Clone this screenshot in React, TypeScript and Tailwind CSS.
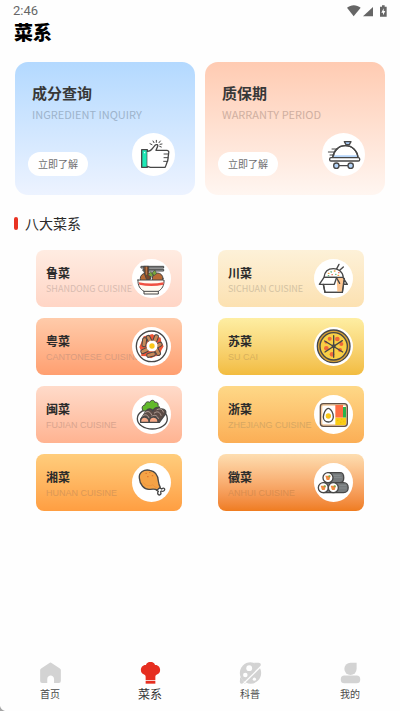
import React from 'react';

const INK = '#474747';

function ThumbIcon() {
  return (
    <svg viewBox="0 0 129 129" className="w-full h-full" fill="none" stroke={INK} strokeWidth="4" strokeLinejoin="round" strokeLinecap="round">
      <path d="M29 50h17v53H29z" fill="#1de9b6" />
      <circle cx="38" cy="59" r="2" fill="#fff" stroke="none" />
      <path d="M46 55c8 0 11-2 15-8l8-10c4-4 10-2 8 3l-5 12h33c5 1 6 4 5 8-1 3 0 5-1 8s0 6-1 9 0 6-2 9-3 11-7 17H55l-9-3" fill="#fff" />
      <path d="M96 63h12M96 74h11M95 85h10" strokeWidth="3" />
      <path d="M54 32l6 3M63 24l3 5M73 22v6M85 24l-4 5M90 33l-6 1M88 42l-5-2" strokeWidth="3" />
    </svg>
  );
}

function ClocheIcon() {
  return (
    <svg viewBox="0 0 129 129" className="w-full h-full" fill="none" stroke={INK} strokeWidth="4" strokeLinejoin="round" strokeLinecap="round">
      <path d="M32 74c3-22 18-36 38-36s36 14 38 36z" fill="#fff" />
      <path d="M35 67h70v6H34z" fill="#b5d5fa" stroke="none" />
      <path d="M32 74c3-22 18-36 38-36s36 14 38 36" />
      <path d="M67 26h20l-5 9H72z" fill="#a4c8f4" />
      <rect x="23" y="74" width="90" height="10" rx="4" fill="#fff" />
      <path d="M30 48h17M19 57h19M24 66h12" strokeWidth="3" />
      <path d="M51 98h26" />
      <circle cx="43" cy="98" r="8" fill="#b5d5fa" />
      <circle cx="86" cy="98" r="8" fill="#b5d5fa" />
    </svg>
  );
}

function NoodleBowlIcon() {
  return (
    <svg viewBox="0 0 117 117" className="w-full h-full" fill="none" stroke={INK} strokeWidth="3" strokeLinejoin="round" strokeLinecap="round">
      <path d="M28 22h67v5H28zM34 31h61v5H34z" fill="#a8adb1" />
      <circle cx="40" cy="58" r="15" fill="#b96a35" />
      <circle cx="77" cy="58" r="16" fill="#b96a35" />
      <path d="M36 22h14v18l6 12-4 10H44L38 46z" fill="#7b4728" />
      <path d="M43 24v22" stroke="#c58150" />
      <path d="M48 48l8-10 8 7-3 9zM60 42l9-9 5 11-8 6z" fill="#78a83c" strokeWidth="2" />
      <path d="M18 63h78c1 17-6 27-17 34v8H36v-8C24 90 17 80 18 63z" fill="#fffaf0" />
      <path d="M20 70c24 5 50 5 75 0l-1 7c-24 5-48 5-72 0z" fill="#ef5142" stroke="none" />
      <path d="M36 97h43" />
    </svg>
  );
}

function TakeoutBoxIcon() {
  return (
    <svg viewBox="0 0 117 117" className="w-full h-full" fill="none" stroke={INK} strokeWidth="4" strokeLinejoin="round" strokeLinecap="round">
      <path d="M67 31l8-15M77 34l11-10" />
      <path d="M30 55c2-18 14-26 28-26s28 8 30 26z" fill="#fff" />
      <path d="M43 43h2M61 36h2M72 49h2" stroke="#f0a13d" />
      <path d="M51 38l1 1M65 46h1M43 50h1" stroke="#5cb57b" />
      <path d="M54 47h1M74 41h1" stroke="#ea6753" />
      <path d="M28 76l5 24h52l6-42H62z" fill="#fff" />
      <path d="M68 57h22l-6 41H70z" fill="#fdc58f" stroke="none" />
      <path d="M30 55h38l-7 21H16z" fill="#fff" />
      <path d="M68 57l9 16M88 57l12 19-12-1M28 76l5 24h52l5-37" />
    </svg>
  );
}

function SausagePlateIcon() {
  return (
    <svg viewBox="0 0 117 117" className="w-full h-full" fill="none" stroke={INK} strokeWidth="3" strokeLinejoin="round" strokeLinecap="round">
      <circle cx="59" cy="58" r="46" fill="#fff" strokeWidth="4" />
      <path d="M35 28l14-3 12-4 10 7 15 4 2 14 7 12-7 12-4 16-14 2-13 6-12-6-17-1-1-15-5-12 6-14z" fill="#ed5536" stroke="none" />
      <g fill="#c88958">
        <rect x="31" y="32" width="12" height="27" rx="5" transform="rotate(8 37 45)" />
        <rect x="46" y="25" width="11" height="24" rx="5" transform="rotate(-28 51 37)" />
        <rect x="65" y="23" width="12" height="25" rx="5" transform="rotate(20 71 35)" />
        <rect x="73" y="43" width="12" height="25" rx="5" transform="rotate(60 79 55)" />
        <rect x="70" y="61" width="12" height="25" rx="5" transform="rotate(-28 76 73)" />
        <rect x="51" y="70" width="12" height="26" rx="5" transform="rotate(75 57 83)" />
        <rect x="32" y="59" width="12" height="24" rx="5" transform="rotate(65 38 71)" />
      </g>
      <path d="M60 41c11-1 18 7 16 16 1 10-7 17-16 16-10 1-17-6-16-16-1-9 6-17 16-16z" fill="#fff" stroke="none" />
      <circle cx="60" cy="57" r="8" fill="#fbc719" stroke="none" />
    </svg>
  );
}

function PizzaIcon() {
  return (
    <svg viewBox="0 0 117 117" className="w-full h-full" fill="none" stroke={INK} strokeWidth="4" strokeLinecap="round">
      <circle cx="59" cy="58" r="49" fill="#d8a334" />
      <circle cx="59" cy="58" r="41" fill="#f9cf45" />
      <g fill="#ee683a" stroke="none">
        <circle cx="47" cy="35" r="6" />
        <circle cx="70" cy="36" r="7" />
        <circle cx="82" cy="51" r="6" />
        <circle cx="78" cy="69" r="6" />
        <circle cx="54" cy="82" r="7" />
        <circle cx="37" cy="64" r="7" />
        <circle cx="36" cy="46" r="4" />
      </g>
      <path d="M59 26v65M32 42l54 33M33 75l52-34" />
      <circle cx="59" cy="58" r="4" fill={INK} />
    </svg>
  );
}

function BraisedRollIcon() {
  return (
    <svg viewBox="0 0 117 117" className="w-full h-full" fill="none" stroke={INK} strokeWidth="3" strokeLinejoin="round" strokeLinecap="round">
      <ellipse cx="61" cy="71" rx="45" ry="31" fill="#fff" strokeWidth="4" />
      <path d="M33 47c-5-8-3-16 6-17 0-8 8-12 14-8 5-10 16-6 15 0 8-2 12 4 10 9 6 4 5 12 1 16z" fill="#62b92b" />
      <path d="M26 73l17-26c6-8 18-7 19 1 7-14 21-13 23-6 14-2 20 7 14 17L82 82H30z" fill="#5b4b45" strokeWidth="4" />
      <path d="M32 63c7-7 16-4 19 6M39 53c8-7 17-3 20 7M59 65c8-8 17-4 20 6M67 54c9-7 17-3 20 7M75 44c9-5 16-2 19 7" stroke="#b5a29a" />
      <path d="M26 82c-2-10 5-17 13-16s13 8 12 16zM52 82c-2-10 5-17 14-16s13 8 12 16z" fill="#f6a987" strokeWidth="4" />
    </svg>
  );
}

function BentoIcon() {
  return (
    <svg viewBox="0 0 117 117" className="w-full h-full" fill="none">
      <rect x="19" y="26" width="81" height="68" rx="9" fill="#f2ca9f" stroke="#615146" strokeWidth="4" />
      <rect x="25" y="32" width="70" height="56" rx="3" fill="#fff" />
      <path d="M64 30h23v38H64z" fill="#ff6d43" />
      <path d="M87 36h9v32h-9z" fill="#28b34b" />
      <path d="M64 68h32v18c0 2-2 4-4 4H64z" fill="#facc16" />
      <path d="M69 76h4M81 73h4M78 82h4M88 79h3" stroke="#e4ac0c" strokeWidth="2" />
      <path d="M43 40c8 0 16 17 15 26s-7 15-15 15-15-6-15-15 7-26 15-26z" fill="#fff" stroke={INK} strokeWidth="4" />
      <circle cx="43" cy="63" r="8" fill="#f8c719" />
    </svg>
  );
}

function DrumstickIcon() {
  return (
    <svg viewBox="0 0 117 117" className="w-full h-full" fill="none" stroke={INK} strokeWidth="4" strokeLinejoin="round" strokeLinecap="round">
      <path d="M73 81l9-7 7 4c7-6 13 1 6 6-3 2-5 1-7 0l-2 2c3 8-3 13-8 8-3-4 0-7 1-9z" fill="#fff" />
      <path d="M22 45c-2-17 14-27 32-23 16 3 24 14 25 32 1 9 3 14 6 19l-10 8c-5-4-12-3-21-2-18 2-31-15-32-34z" fill="#f5a346" />
      <path d="M34 59c7 10 18 12 29 6 2 5 8 8 13 10" stroke="#e8903c" strokeWidth="2" />
      <path d="M42 31h1M53 28h1M47 41h1M61 38h1" stroke="#df762d" />
    </svg>
  );
}

function RiceRollIcon() {
  return (
    <svg viewBox="0 0 117 117" className="w-full h-full" fill="none" stroke={INK} strokeWidth="4">
      <path d="M42 29h36c15 0 15 30 0 30H42z" fill="#777b7d" />
      <path d="M28 59h30v30H28zM58 59h31c18 0 18 30 0 30H58z" fill="#777b7d" />
      <path d="M57 37h23M58 43h25M76 67h21M76 75h22" stroke="#93979a" strokeWidth="2" />
      {[[42, 44], [28, 74], [58, 74]].map(([cx, cy]) => (
        <g key={`${cx}-${cy}`}>
          <circle cx={cx} cy={cy} r="15" fill="#fff" />
          <path d={`M${cx - 8} ${cy - 6}h16l-4 13h-8z`} fill="#f28743" stroke="none" />
          <circle cx={cx + 4} cy={cy - 4} r="3" fill="#73b24c" stroke="none" />
          <circle cx={cx - 3} cy={cy + 2} r="2" fill="#dca73b" stroke="none" />
        </g>
      ))}
    </svg>
  );
}

const features = [
  { title: '成分查询', sub: 'INGREDIENT INQUIRY', icon: <ThumbIcon />, bg: 'from-[#b3d9ff] to-[#edf3ff]', subColor: 'text-[#9db3cb]' },
  { title: '质保期', sub: 'WARRANTY PERIOD', icon: <ClocheIcon />, bg: 'from-[#ffcbb2] to-[#fff6f1]', subColor: 'text-[#cfafa1]' },
];

const cuisines = [
  { name: '鲁菜', sub: 'SHANDONG CUISINE', icon: <NoodleBowlIcon />, bg: 'from-[#ffece2] to-[#ffd5c5]', subColor: 'text-[#d8bbb0]' },
  { name: '川菜', sub: 'SICHUAN CUISINE', icon: <TakeoutBoxIcon />, bg: 'from-[#fdf1d8] to-[#fce1b1]', subColor: 'text-[#d3c2a2]' },
  { name: '粤菜', sub: 'CANTONESE CUISINE', icon: <SausagePlateIcon />, bg: 'from-[#ffcbaa] to-[#ff9f70]', subColor: "text-[#d99c7f] font-['Liberation_Sans',sans-serif]" },
  { name: '苏菜', sub: 'SU CAI', icon: <PizzaIcon />, bg: 'from-[#feeea2] to-[#f2bc3f]', subColor: "text-[#d8b05c] font-['Liberation_Sans',sans-serif]" },
  { name: '闽菜', sub: 'FUJIAN CUISINE', icon: <BraisedRollIcon />, bg: 'from-[#ffdbca] to-[#ffb391]', subColor: "text-[#d9a48e] font-['Liberation_Sans',sans-serif]" },
  { name: '浙菜', sub: 'ZHEJIANG CUISINE', icon: <BentoIcon />, bg: 'from-[#fed887] to-[#fbae55]', subColor: "text-[#d7a762] font-['Liberation_Sans',sans-serif]" },
  { name: '湘菜', sub: 'HUNAN CUISINE', icon: <DrumstickIcon />, bg: 'from-[#ffcd7c] to-[#ff9e41]', subColor: "text-[#db9856] font-['Liberation_Sans',sans-serif]" },
  { name: '徽菜', sub: 'ANHUI CUISINE', icon: <RiceRollIcon />, bg: 'from-[#fddeb1] to-[#ef7c1e]', subColor: "text-[#da8d4e] font-['Liberation_Sans',sans-serif]" },
];

const tabs = [
  {
    label: '首页',
    icon: <path d="M33 2q2-1 4 0l27 18q3 2 3 5v34q0 6-6 6H46V53c0-15-21-15-21 0v12H9q-6 0-6-6V25q0-3 3-5z" />,
  },
  {
    label: '菜系',
    active: true,
    icon: (
      <>
        <path d="M21 9C26-4 44-4 49 9c17-1 22 23 6 30-4 2-5 4-5 9v8H20v-8c0-5-1-7-5-9C-1 32 4 8 21 9z" />
        <path d="M20 58h30v9H20z" />
      </>
    ),
  },
  {
    label: '科普',
    icon: (
      <>
        <circle cx="35" cy="34" r="33" />
        <path d="M46 2h14q8 0 7 8l-5 12zM3 46l-1 16q0 5 5 5h13z" />
        <path d="M10 70L70 11" fill="none" stroke="#fefefe" strokeWidth="4" />
        <g fill="#fefefe">
          <circle cx="31" cy="19" r="9" />
          <circle cx="19" cy="40" r="7" />
          <circle cx="47" cy="53" r="5" />
        </g>
      </>
    ),
  },
  {
    label: '我的',
    icon: (
      <>
        <path d="M54 2v19a19 19 0 11-19-19z" />
        <rect x="5" y="42" width="60" height="24" rx="11" />
      </>
    ),
  },
];

export default function App() {
  return (
    <div className="relative min-h-screen flex flex-col bg-[#fefefe] font-['Noto_Sans_CJK_SC',sans-serif] text-[#2b2b2b]">
      {/* Status bar */}
      <div className="flex items-center justify-between h-[22px] px-[13px] text-[#666]">
        <span className="font-[Roboto,sans-serif] text-[13px] leading-4">2:46</span>
        <svg viewBox="0 0 120 36" className="w-10 h-3" fill="currentColor">
          <path d="M0 8C12-2 29-2 41 8L20 34z" />
          <path d="M78 6v28H48z" />
          <path fillRule="evenodd" d="M105 1h8v4h6v30H99V5h6zM110 10l-7 13h5v8l7-13h-5z" />
        </svg>
      </div>

      <main className="flex-1">
        <h1 className="pl-[14px] text-[19px] leading-5 font-black text-black">菜系</h1>

        {/* Feature cards */}
        <section className="grid grid-cols-2 gap-[10px] px-[15px] pt-5">
          {features.map((f) => (
            <div key={f.title} className={`h-[133px] rounded-[13px] bg-linear-to-b ${f.bg} flex flex-col pl-[13px] pr-5 pt-5 pb-[19px]`}>
              <h2 className="pl-1 text-[15px] leading-[22px] font-bold text-[#383838]">{f.title}</h2>
              <p className={`pl-1 text-[11px] leading-5 whitespace-nowrap ${f.subColor}`}>{f.sub}</p>
              <div className="mt-auto flex items-end justify-between">
                <button className="w-[60px] h-6 rounded-full bg-white text-[10px] leading-6 text-[#6e6e6e]">立即了解</button>
                <span className="w-[43px] h-[43px] rounded-full bg-white shrink-0">{f.icon}</span>
              </div>
            </div>
          ))}
        </section>

        <h2 className="flex items-center gap-[7px] pl-[14px] pt-[18px] text-[14px] leading-5">
          <span className="w-1 h-[13px] rounded-sm bg-[#e93323]"></span>
          八大菜系
        </h2>

        {/* Cuisine list */}
        <section className="grid grid-cols-2 gap-x-9 gap-y-[11px] px-9 pt-[17px]">
          {cuisines.map((c) => (
            <a key={c.name} href="#cuisine" className={`h-[57px] rounded-lg bg-linear-to-b ${c.bg} flex items-center justify-between pl-[10px] pr-[11px]`}>
              <div className="w-0 pt-1">
                <h3 className="text-[12px] leading-4 font-bold whitespace-nowrap">{c.name}</h3>
                <p className={`text-[9px] leading-4 whitespace-nowrap ${c.subColor}`}>{c.sub}</p>
              </div>
              <span className="relative w-[39px] h-[39px] rounded-full bg-white shrink-0">{c.icon}</span>
            </a>
          ))}
        </section>
      </main>

      {/* Bottom tabs */}
      <nav className="grid grid-cols-4 pb-[9px]">
        {tabs.map((t) => (
          <a key={t.label} href="#tab" className="flex flex-col items-center gap-[2px]">
            <svg viewBox="0 0 70 68" className={t.active ? 'w-[23px] h-[22px] text-[#e62e20]' : 'w-[23px] h-[22px] text-[#d3d3d3]'} fill="currentColor">
              {t.icon}
            </svg>
            <span className={t.active ? 'text-[12px] leading-4 text-[#333]' : 'text-[10px] leading-4 text-[#4a4a4a]'}>{t.label}</span>
          </a>
        ))}
      </nav>

      <svg viewBox="0 0 5 5" className="absolute left-0 bottom-0 w-[5px] h-[5px]" fill="#a5a5a5">
        <path d="M0 0q1 4 5 5H0z" />
      </svg>
    </div>
  );
}
